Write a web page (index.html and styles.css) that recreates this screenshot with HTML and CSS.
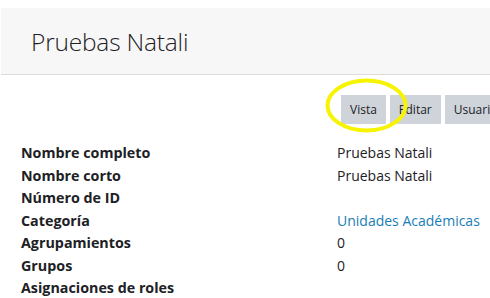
FILE: index.html
```html
<html>
<head>
<link rel="stylesheet" href="styles.css">
</head>
<body>
<div class="page">
    <div class="pagehead">
        <h1>Pruebas Natali</h1>
    </div>
    <div class="actions">
        <button class="btn">Vista</button><button class="btn">Editar</button><button class="btn">Usuarios</button>
    </div>
    <dl class="details">
        <dt>Nombre completo</dt><dd>Pruebas Natali</dd>
        <dt>Nombre corto</dt><dd>Pruebas Natali</dd>
        <dt>Número de ID</dt><dd></dd>
        <dt>Categoría</dt><dd><a href="#">Unidades Académicas</a></dd>
        <dt>Agrupamientos</dt><dd>0</dd>
        <dt>Grupos</dt><dd>0</dd>
        <dt>Asignaciones de roles</dt><dd></dd>
    </dl>
    <svg class="marker" width="92" height="60" viewBox="0 0 92 60">
        <ellipse cx="45.5" cy="29.5" rx="39" ry="25" fill="none" stroke="#f6f400" stroke-width="4"/>
    </svg>
</div>
</body>
</html>
```

FILE: styles.css
```css
body, html {
    margin: 0;
    padding: 0;
    overflow: hidden;
    background: white;
}
body {
    font-family: "Open Sans", sans-serif;
    color: #1d2125;
}
.page {
    position: relative;
    padding-top: 8px;
}
.pagehead {
    margin-left: 1px;
    height: 66px;
    background: #f7f7f7;
    border-bottom: 1px solid #dcdcdc;
    display: flex;
    align-items: center;
    padding-left: 30px;
}
.pagehead h1 {
    margin: 0;
    font-size: 24.5px;
    font-weight: 300;
    letter-spacing: -0.2px;
}
.actions {
    display: flex;
    gap: 4px;
    padding-left: 341px;
    margin-top: 20px;
    white-space: nowrap;
}
.btn {
    flex: 0 0 auto;
    height: 29px;
    border: 0;
    background: #ced4da;
    color: #1d2125;
    font-family: "Open Sans", sans-serif;
    font-size: 12px;
    padding: 0 9px;
}
.details {
    display: grid;
    grid-template-columns: 316px auto;
    grid-auto-rows: 22.5px;
    margin: 18px 0 0 21px;
    font-size: 14px;
    line-height: 22.5px;
}
.details dt {
    font-weight: bold;
    font-size: 14.3px;
}
.details dd {
    margin: 0;
}
.details a {
    color: #1a7db6;
    text-decoration: none;
}
.marker {
    position: absolute;
    left: 321px;
    top: 76px;
}
```
